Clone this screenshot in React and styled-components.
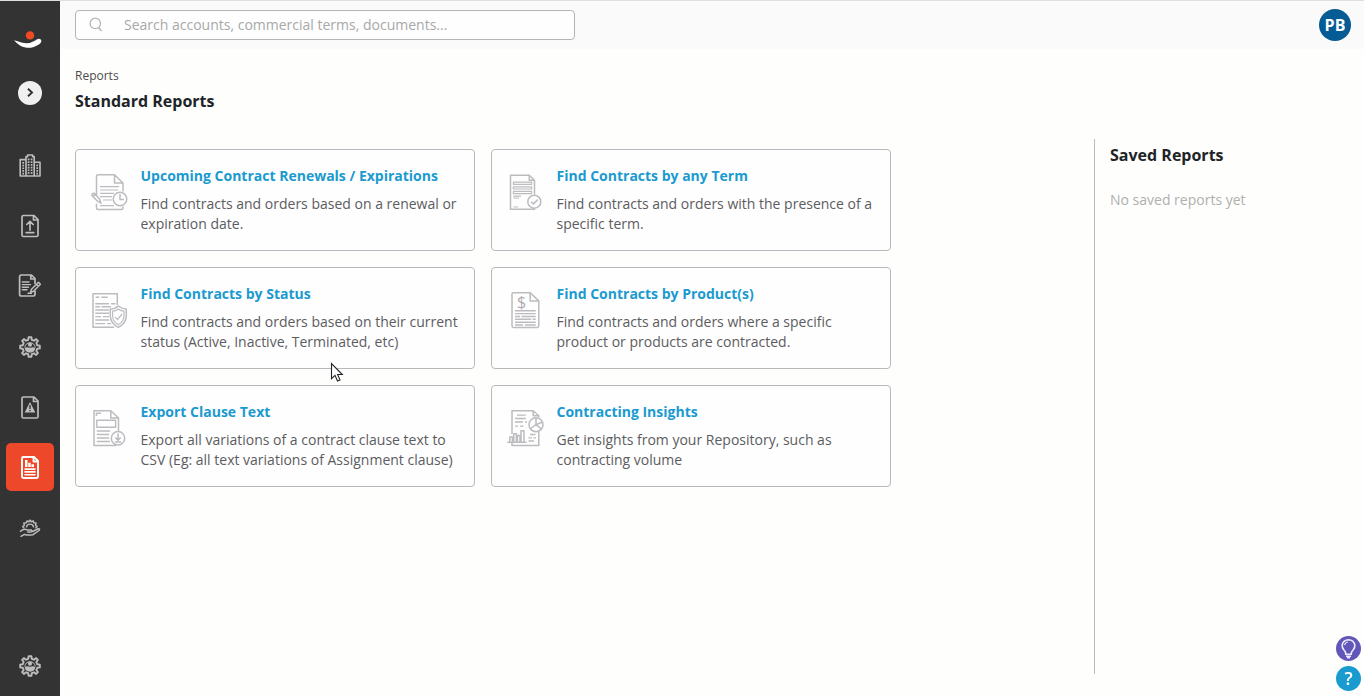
import React from "react";
import styled, { createGlobalStyle } from "styled-components";

const GlobalStyle = createGlobalStyle`
  * { box-sizing: border-box; }
  body {
    margin: 0;
    background: #fefefd;
    font-family: "Open Sans", "Noto Sans", sans-serif;
    color: #222426;
    overflow: hidden;
  }
`;

const Shell = styled.div`
  display: flex;
  height: 696px;
  border-top: 1px solid #dcdfde;
`;

const Sidebar = styled.aside`
  display: flex;
  flex-direction: column;
  align-items: center;
  width: 60px;
  flex: none;
  background: #333333;
  padding: 28px 0 6px;
`;

const Logo = styled.svg`
  width: 32px;
  height: 22px;
  flex: none;
`;

const ExpandButton = styled.button`
  display: flex;
  align-items: center;
  justify-content: center;
  width: 24px;
  height: 24px;
  margin: 30px 0 37px;
  padding: 0;
  border: 0;
  border-radius: 50%;
  background: #f0f0f0;
  flex: none;
`;

const Nav = styled.nav`
  display: flex;
  flex-direction: column;
  gap: 12.24px;
  flex: 1;
`;

const NavItem = styled.a`
  display: flex;
  width: 48px;
  height: 48px;
  border-radius: 5px;
  flex: none;
  color: ${(p) => (p.$active ? "#ffffff" : "#bdbdbd")};
  background: ${(p) => (p.$active ? "#ec4829" : "transparent")};
`;

const NavSvg = styled.svg`
  width: 48px;
  height: 48px;
  fill: none;
  stroke: currentColor;
  stroke-width: 1.7;
  stroke-linecap: round;
  stroke-linejoin: round;
`;

const Main = styled.div`
  flex: 1;
  display: flex;
  flex-direction: column;
  min-width: 0;
`;

const TopBar = styled.header`
  display: flex;
  align-items: center;
  justify-content: space-between;
  height: 48px;
  flex: none;
  padding: 0 13px 0 15px;
  background: #fafafa;
`;

const SearchBox = styled.label`
  display: flex;
  align-items: center;
  width: 500px;
  height: 30px;
  padding-left: 13px;
  gap: 20px;
  border: 1px solid #b4b4b8;
  border-radius: 4px;
  background: #fefefe;
`;

const SearchInput = styled.input`
  flex: 1;
  border: 0;
  padding: 0;
  outline: 0;
  background: transparent;
  font: 14px/20px "Open Sans", sans-serif;
  &::placeholder { color: #a8a8a8; opacity: 1; }
`;

const Avatar = styled.div`
  display: flex;
  align-items: center;
  justify-content: center;
  width: 32px;
  height: 32px;
  border-radius: 50%;
  background: #055c94;
  color: #ffffff;
  font-size: 16px;
  font-weight: 700;
`;

const Body = styled.main`
  display: flex;
  justify-content: space-between;
  flex: 1;
  padding-left: 15px;
`;

const Crumb = styled.div`
  margin-top: 18px;
  font-size: 12px;
  line-height: 18px;
  color: #4c4c4c;
`;

const Heading = styled.h1`
  margin: ${(p) => p.$top || 0}px 0 0;
  font-size: 16px;
  line-height: 24px;
  font-weight: 700;
  color: #212427;
`;

const CardGrid = styled.div`
  display: grid;
  grid-template-columns: repeat(2, 400px);
  grid-auto-rows: 102px;
  gap: 16px;
  margin-top: 36px;
`;

const Card = styled.article`
  display: flex;
  padding: 15px 8px 0 13px;
  border: 1px solid #b9b9bd;
  border-radius: 4px;
  background: #fefefe;
`;

const CardIcon = styled.svg`
  width: 40px;
  height: 40px;
  flex: none;
  margin: 7px 11.5px 0 0;
  fill: none;
  stroke: #bcbcc0;
  stroke-width: 1.5;
  stroke-linejoin: round;
  text {
    font: 16px "Open Sans", sans-serif;
    fill: #acacb0;
    stroke: none;
  }
`;

const CardTitle = styled.h2`
  margin: 0 0 8px;
  font-size: 14px;
  line-height: 21px;
  font-weight: 700;
  color: #1b9ad0;
  white-space: nowrap;
`;

const CardText = styled.p`
  margin: 0;
  font-size: 14px;
  line-height: 20px;
  color: #5c5c5f;
  white-space: pre;
`;

const Saved = styled.aside`
  width: 270px;
  height: 535px;
  margin-top: 90px;
  padding: 4px 0 0 15px;
  border-left: 1px solid #bbbbbf;
`;

const Empty = styled.p`
  margin: 23px 0 0;
  font-size: 14px;
  line-height: 20px;
  color: #b0b0b0;
`;

const Floating = styled.div`
  position: fixed;
  right: 3px;
  bottom: 5px;
  display: flex;
  flex-direction: column;
  gap: 5px;
`;

const RoundButton = styled.button`
  display: flex;
  align-items: center;
  justify-content: center;
  width: 25px;
  height: 25px;
  padding: 0;
  border: 0;
  border-radius: 50%;
  background: ${(p) => p.$bg};
  color: #ffffff;
  font: 600 18px/25px "Open Sans", sans-serif;
`;

const Pointer = styled.svg`
  position: fixed;
  left: 330px;
  top: 362px;
  width: 14px;
  height: 21px;
`;

const filled = { fill: "currentColor", stroke: "none" };
const page = "M17 13.5H28L32 17.5V33.1Q32 34.5 30.6 34.5H17.4Q16 34.5 16 33.1V14.9Q16 13.5 17.4 13.5M27.5 13.7V18H32";

const GearUser = () => (
  <>
    <path
      strokeWidth="1.9"
      d="M22.2 16.8 22.6 14.2H25.4L25.8 16.8 28 17.7 30.1 16.1 31.9 17.9 30.3 20 31.2 22.2 33.8 22.6V25.4L31.2 25.8 30.3 28 31.9 30.1 30.1 31.9 28 30.3 25.8 31.2 25.4 33.8H22.6L22.2 31.2 20 30.3 17.9 31.9 16.1 30.1 17.7 28 16.8 25.8 14.2 25.4V22.6L16.8 22.2 17.7 20 16.1 17.9 17.9 16.1 20 17.7Z"
    />
    <circle cx="24" cy="21.7" r="2.1" {...filled} />
    <path {...filled} d="M18.6 24.8Q21 23.7 24 24.8 27 23.7 29.4 24.8 28.8 29.6 24 29.8 19.2 29.6 18.6 24.8Z" />
    <path strokeWidth="1" d="M18.8 24A5.3 5.3 0 0 1 29.2 24" />
  </>
);

const navIcons = {
  Accounts: (
    <>
      <path strokeWidth="1.6" d="M20 34V14.6H21.6V13H26.6V14.6H28.2V34ZM20 17.6H14.2V34H20M28.2 20.2H34V34H28.2" />
      <path strokeWidth="1.7" strokeDasharray="1.7 1" strokeLinecap="butt" d="M22.6 16.6V32.4M25.6 16.6V32.4M17.2 20V32.4M31.2 22.6V32.4" />
    </>
  ),
  Upload: (
    <>
      <path d={page} />
      <path d="M24 28V19.5M20.8 22.5 24 19.3 27.2 22.5M20.2 30.6H27.8" />
    </>
  ),
  Edit: (
    <>
      <path d="M29 21.5V16.5L25.5 13H15.3Q13.6 13 13.6 14.7V32.4Q13.6 34 15.3 34H27.4Q29 34 29 32.4V29M24.8 13.3V17H29" />
      <path strokeWidth="1.4" d="M16.3 20H23M16.3 22.6H24.5M16.3 25.2H22.5M16.3 27.8H21M22 31.3H25.5" />
      <path strokeWidth="1.5" d="M32.5 20.3 34.4 22.2 27.5 29.2 24.6 30.2 25.5 27.2ZM30.5 22.3 32.4 24.2" />
    </>
  ),
  Team: <GearUser />,
  Alerts: (
    <g transform="translate(0 .5)">
      <path d={page} />
      <path {...filled} fillRule="evenodd" d="M24 18.6 29.3 29H18.7ZM23.3 21.6V25.6H24.7V21.6ZM23.3 26.4V27.8H24.7V26.4Z" />
    </g>
  ),
  Reports: (
    <g transform="translate(0 .5)">
      <path strokeWidth="1.9" d={page} />
      <path {...filled} d="M19 16.5H21.5V23.5H19ZM22.2 19.3H24.7V23.5H22.2ZM25.4 20.8H28V23.5H25.4Z" />
      <path strokeWidth="1.6" d="M19 25.6H29M19 28.4H29M19 31.2H29" />
    </g>
  ),
  Services: (
    <g transform="translate(0 1.5)">
      <path strokeWidth="1.5" d="M17.8 23.2 16.6 22 18.3 20.8 17.9 18.6 20.4 18.2 21 16.4 22.8 17.2 24 15.6 25.3 17.2 27.2 16.4 27.7 18.2 30 18.6 29.5 20.8 31.2 22 29.8 23.2" />
      <path strokeWidth="1.4" d="M20.5 22.4A3.6 3.6 0 0 1 27.5 22.4" />
      <path strokeWidth="1.5" d="M14.5 26.8Q18 23.5 21 25.4H25.2Q26.8 26.7 24.8 27.5H21.6M26.6 27 32.2 24.3Q34.5 24.2 33 26L27 30.2Q21 31.2 18.4 29.8L15 31.8" />
    </g>
  ),
};

const cards = [
  {
    title: "Upcoming Contract Renewals / Expirations",
    text: "Find contracts and orders based on a renewal or\nexpiration date.",
    icon: (
      <>
        <path d="M7.5 24V4.4Q7.5 2.7 9.2 2.7H25.5L34 11V19.5M25.5 2.7V11H34M7.5 31.5V36Q7.5 37.5 9 37.5H32.5Q34 37.5 34 36V34.5" />
        <path strokeWidth="1.2" d="M11 14.7H30M11 18H29M11 21.3H25M11 24.7H23M14 28H23M11 33.7H25" />
        <circle cx="31" cy="27" r="6.8" />
        <path d="M31 22V27.4H35" />
        <path d="M3.2 21.8 5.4 21.2 10.7 27.2 12 31.2 8.5 29.2 3 23.5ZM4 24.2 6.6 22.4" />
      </>
    ),
  },
  {
    title: "Find Contracts by any Term",
    text: "Find contracts and orders with the presence of a\nspecific term.",
    icon: (
      <>
        <path d="M29.5 22.5V8.2L24.3 3.3H5.5V37.3H29.5V36M24.3 3.3V8.2H29.5" />
        <path strokeWidth="1.2" d="M8.4 10.2H26.6V12.3H8.4ZM8.4 14.8H26.6V17H8.4ZM8.4 19.4H26.6V21.6H8.4ZM8.4 24.2H16M8.4 26H14M8.4 35H13" />
        <circle cx="29.3" cy="29.7" r="6.5" />
        <path d="M26.2 29.8 28.6 32 32.7 27.6" />
      </>
    ),
  },
  {
    title: "Find Contracts by Status",
    text: "Find contracts and orders based on their current\nstatus (Active, Inactive, Terminated, etc)",
    icon: (
      <>
        <path d="M28.3 15V3.7H4V37.3H25" />
        <path strokeWidth="1.4" d="M6.7 7.3H10.3M12.3 7.3H18.7M6.3 13.7H20M22 13.7H26.5M6.3 16.8H11M12.5 16.8H22M6.3 20H20M6.3 23.3H20M6.3 26.6H12M14 26.6H20M6.3 30H20M6.3 33.6H16M18 33.6H22" />
        <path d="M29.3 16Q33 19 37.3 19V26Q37 33.5 29.3 37.3 21.6 33.5 21.3 26V19Q26 19 29.3 16Z" />
        <path strokeWidth="1.2" d="M29.3 19Q32 21 35 21.2V26Q34.7 31.8 29.3 34.7 23.9 31.8 23.6 26V21.2Q27 21 29.3 19ZM26 27 28.5 29.6 33 24" />
      </>
    ),
  },
  {
    title: "Find Contracts by Product(s)",
    text: "Find contracts and orders where a specific\nproduct or products are contracted.",
    icon: (
      <>
        <path d="M25.2 2.7H8.4Q7 2.7 7 4.1V36Q7 37.4 8.4 37.4H32.4Q33.8 37.4 33.8 36V10.9ZV10.9H33.8" />
        <text x="12" y="17.5">$</text>
        <path strokeWidth="1.4" d="M10 20.8H30.7M10 23.6H30.7M10 26.5H15M16.5 26.5H30.7M10 29.3H26M27.5 29.3H30.7M10 32.2H30.7M10 35H18M20 35H30.7" />
      </>
    ),
  },
  {
    title: "Export Clause Text",
    text: "Export all variations of a contract clause text to\nCSV (Eg: all text variations of Assignment clause)",
    icon: (
      <>
        <path d="M29.5 23V10L21.8 2.7H5V37.4H27M21.8 2.7V10H29.5M7.4 8V5.3H12" />
        <path strokeWidth="1.4" d="M7.8 12.2H26.6V19.2H7.8ZM7.8 23H21M7.8 26.5H20M7.8 30H20M7.8 33.5H21" />
        <circle cx="29" cy="30.3" r="6.7" />
        <path d="M29 25.5V32M26.3 29.5 29 32.2 31.7 29.5M25.8 34H32.2" />
      </>
    ),
  },
  {
    title: "Contracting Insights",
    text: "Get insights from your Repository, such as\ncontracting volume",
    icon: (
      <>
        <path d="M7 26V2.7H28.2L33.8 7.8V9.5M28.2 2.7V7.8H33.8M33.8 24V37.4H7V35" />
        <path strokeWidth="1.3" d="M12 7.2H20.7M10 10.5H20.7M10 14H18M20 14H22M10 18.2H13M15 18.2H18.5M25 26.5H30.5M23.5 29.8H27M28.5 29.8H31M23.5 33H29" />
        <path d="M2.3 34.3H21.5M4.8 34V29H7.4V34M8.8 34V25.7H11.4V34M12.4 34V27.5H15V34M16 34V22.7H19V34" />
        <circle cx="31" cy="16.7" r="7" />
        <path d="M31 9.7V16.7L36.5 21M31 16.7 25.5 20.5M31 16.7 37.5 14" />
      </>
    ),
  },
];

export default function App() {
  return (
    <>
      <GlobalStyle />
      <Shell>
        <Sidebar>
          <Logo viewBox="0 0 32 22">
            <circle cx="16" cy="6.4" r="4.2" fill="#f04a25" />
            <path fill="#ffffff" d="M0 11.2Q3.5 12 7.5 13.6 15 15.6 21.2 11.6 24.3 8.6 26.6 10.2 28.6 12.6 25.2 15.2 19.5 19.2 12.8 18.8 5.8 18 0 11.2Z" />
          </Logo>
          <ExpandButton aria-label="Expand menu">
            <svg width="12" height="12" viewBox="0 0 12 12" fill="none" stroke="#303030" strokeWidth="1.9">
              <path d="M4 1.8 8 5.5 4 9.2" />
            </svg>
          </ExpandButton>
          <Nav>
            {Object.entries(navIcons).map(([name, drawing]) => (
              <NavItem key={name} $active={name === "Reports"} aria-label={name}>
                <NavSvg viewBox="0 0 48 48">{drawing}</NavSvg>
              </NavItem>
            ))}
          </Nav>
          <NavItem aria-label="Settings">
            <NavSvg viewBox="0 0 48 48"><GearUser /></NavSvg>
          </NavItem>
        </Sidebar>
        <Main>
          <TopBar>
            <SearchBox>
              <svg width="15" height="16" viewBox="0 0 15 16" fill="none" stroke="#b3b3b7" strokeWidth="1.2">
                <circle cx="6.3" cy="6.4" r="5.2" />
                <path strokeWidth="1.5" d="M9.4 10.6 12.5 14" />
              </svg>
              <SearchInput placeholder="Search accounts, commercial terms, documents..." />
            </SearchBox>
            <Avatar>PB</Avatar>
          </TopBar>
          <Body>
            <div>
              <Crumb>Reports</Crumb>
              <Heading $top={4}>Standard Reports</Heading>
              <CardGrid>
                {cards.map((card) => (
                  <Card key={card.title}>
                    <CardIcon viewBox="0 0 40 40">{card.icon}</CardIcon>
                    <div>
                      <CardTitle>{card.title}</CardTitle>
                      <CardText>{card.text}</CardText>
                    </div>
                  </Card>
                ))}
              </CardGrid>
            </div>
            <Saved>
              <Heading as="h2">Saved Reports</Heading>
              <Empty>No saved reports yet</Empty>
            </Saved>
          </Body>
        </Main>
      </Shell>
      <Floating>
        <RoundButton $bg="#6257b8" aria-label="Ideas">
          <svg width="25" height="25" viewBox="0 0 25 25" fill="none" stroke="#eeeaff" strokeWidth="1.6">
            <path d="M9.8 18.3Q9.8 15.8 7.8 13.8 5.8 11.2 6.2 8.8 7.4 3.8 12.5 3.7 17.6 3.8 18.8 8.8 19.2 11.2 17.2 13.8 15.2 15.8 15.2 18.3Z" />
            <path d="M8.6 9.2Q9.2 6.4 11.8 6" strokeWidth="1.1" />
            <path d="M10 20.2H15M11 21.6H14" />
          </svg>
        </RoundButton>
        <RoundButton $bg="#1a9bd0" aria-label="Help">?</RoundButton>
      </Floating>
      <Pointer viewBox="0 0 14 21">
        <path d="M1.5 1.5V16.7L5 13.4 7.5 19 10 17.9 7.6 12.5H12.3Z" fill="#ffffff" stroke="#222222" strokeWidth="1.1" />
      </Pointer>
    </>
  );
}
